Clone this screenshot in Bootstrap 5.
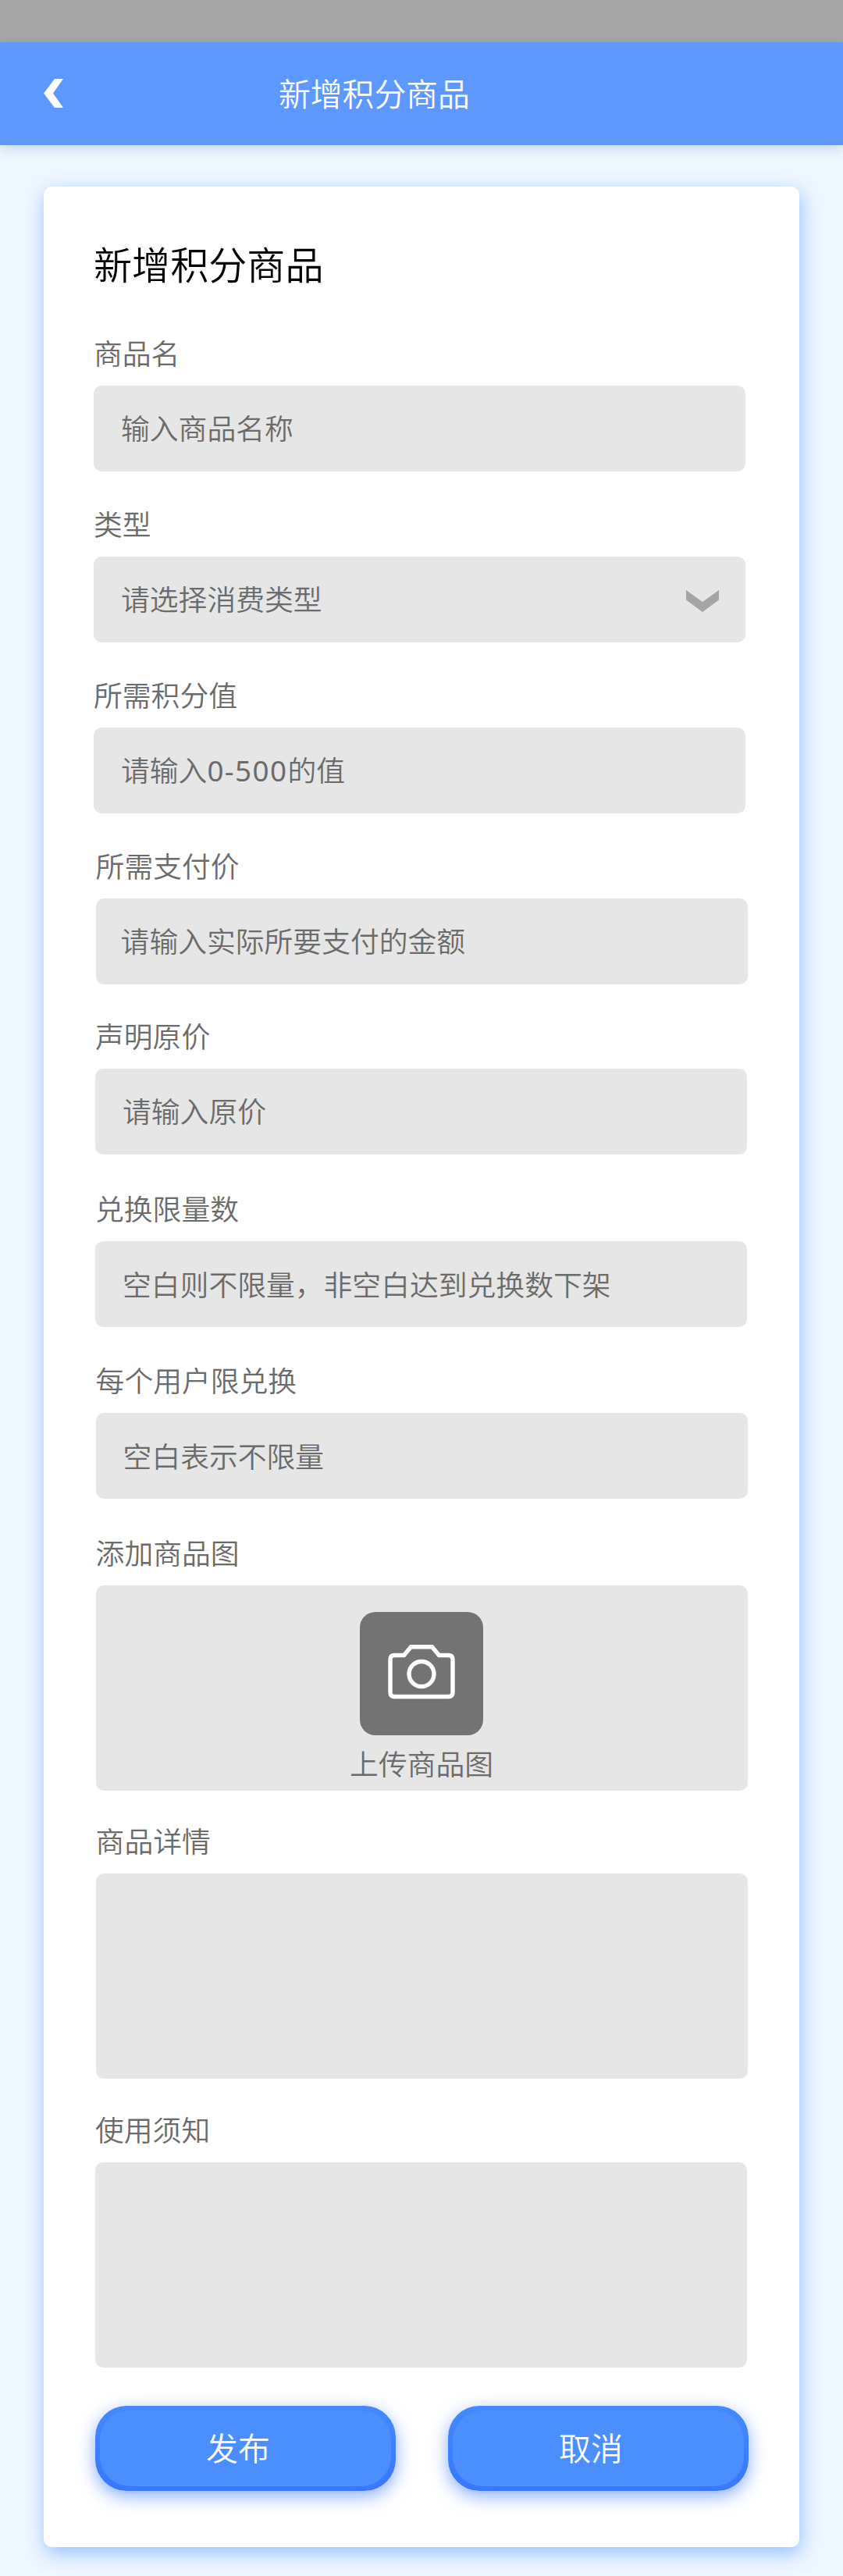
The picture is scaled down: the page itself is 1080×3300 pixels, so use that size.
<!DOCTYPE html>
<html lang="zh-CN">
<head>
<meta charset="utf-8">
<meta name="viewport" content="width=device-width, initial-scale=1">
<title>新增积分商品</title>
<link href="https://cdn.jsdelivr.net/npm/bootstrap@5.3.0/dist/css/bootstrap.min.css" rel="stylesheet">
<style>
body { background: #eff7ff; font-family: "Noto Sans", "Noto Sans CJK SC", sans-serif; font-size: 36.8px; font-weight: 350; color: #6b6b6b; height: 3300px; overflow: hidden; }
.status-strip { height: 54px; background: #a6a6a6; }
.top-bar { height: 132px; background: #5c98ff; padding: 0 0 0 56px; box-shadow: 0 4px 14px rgba(60,110,180,.25); }
.top-title { font-size: 40.8px; line-height: 60px; margin-left: 276px; color: #fff; }
.back-icon { width: 25px; height: 37px; margin-top: -2px; }
.panel { margin: 53px 56px 0; height: 3024px; border-radius: 10px; padding: 68px 0 0 64px; box-shadow: 2px 8px 24px rgba(75,145,255,.55); }
.panel-title { font-size: 49.1px; font-weight: 350; line-height: 64px; margin: 0 0 57px; color: #000; }
.form-group { width: 835px; margin-bottom: 43px; }
.form-group .form-label { display: block; line-height: 50px; margin: 0 0 16px; }
.field-box { height: 110px; border: 0; border-radius: 10px; background: #e6e6e6; color: #6b6b6b; font-size: 36.8px; font-weight: 350; line-height: 50px; padding: 0 34px 1px 35px; }
.field-tall { height: 263px; padding: 34px 0 0; }
.text-low { padding-top: 3px; }
.text-near { padding-left: 32px; }
.shift-2 { margin-left: 2px; } .shift-3 { margin-left: 2.6px; }
.below-40 { margin-bottom: 40px; } .below-41 { margin-bottom: 41px; } .below-42 { margin-bottom: 42px; } .below-44 { margin-bottom: 44px; } .below-45 { margin-bottom: 45px; }
.digits { letter-spacing: 1.4px; font-weight: 400; }
.upload-tile { width: 158px; height: 158px; border-radius: 20px; background: #737373; padding-bottom: 4px; }
.upload-text { line-height: 50px; margin-top: 12px; }
.action-row { gap: 67px; margin: 49px 0 0 2px; }
.action-btn { width: 385px; height: 109px; border: 0; border-radius: 40px; padding: 6px; background: linear-gradient(#4489ff, #3877ff); box-shadow: 0 7px 22px rgba(56,119,255,.6); }
.action-face { height: 97px; border-radius: 38px; background: #4b8eff; color: #fff; font-size: 41px; font-weight: 350; padding: 0 19px 0 0; }
</style>
<script src="https://cdn.jsdelivr.net/npm/bootstrap@5.3.0/dist/js/bootstrap.bundle.min.js"></script>
</head>
<body>
<div class="status-strip"></div>
<header class="top-bar d-flex align-items-center">
  <svg class="back-icon" viewBox="0 0 25 37" aria-hidden="true"><path d="M14 0H25L12 18.5 25 37H14L0 18.5z" fill="#fff"/></svg>
  <div class="top-title">新增积分商品</div>
</header>
<main class="panel bg-white">
  <h1 class="panel-title">新增积分商品</h1>
  <div class="form-group"><label class="form-label">商品名</label><div class="form-control field-box d-flex align-items-center">输入商品名称</div></div>
  <div class="form-group"><label class="form-label">类型</label>
    <div class="form-control field-box d-flex align-items-center justify-content-between">请选择消费类型
      <svg class="mt-1" width="42" height="28" viewBox="0 0 42 28" aria-hidden="true"><path d="M0 0 21 15 42 0V12.5L21 28 0 12.5z" fill="#a5a5a5"/></svg>
    </div>
  </div>
  <div class="form-group"><label class="form-label">所需积分值</label><div class="form-control field-box d-flex align-items-center">请输入<span class="digits">0-500</span>的值</div></div>
  <div class="form-group shift-3 below-42"><label class="form-label">所需支付价</label><div class="form-control field-box text-near d-flex align-items-center">请输入实际所要支付的金额</div></div>
  <div class="form-group shift-2 below-45"><label class="form-label">声明原价</label><div class="form-control field-box d-flex align-items-center">请输入原价</div></div>
  <div class="form-group shift-2 below-44"><label class="form-label">兑换限量数</label><div class="form-control field-box text-low d-flex align-items-center">空白则不限量，非空白达到兑换数下架</div></div>
  <div class="form-group shift-3 below-45"><label class="form-label">每个用户限兑换</label><div class="form-control field-box text-low d-flex align-items-center">空白表示不限量</div></div>
  <div class="form-group shift-3 below-40"><label class="form-label">添加商品图</label>
    <div class="form-control field-box field-tall d-flex flex-column align-items-center">
      <div class="upload-tile d-flex align-items-center justify-content-center">
        <svg width="86" height="70" viewBox="0 0 86 70" fill="none" stroke="#fff" stroke-width="5.4" aria-hidden="true"><path d="M8.500 13.500H20.500L29.500 2.700H56.500L65.500 13.500H77.500Q83 13.500 83 19V61Q83 66.500 77.500 66.500H8.500Q3 66.500 3 61V19Q3 13.500 8.500 13.500z"/><circle cx="43" cy="37.500" r="16"/></svg>
      </div>
      <div class="upload-text">上传商品图</div>
    </div>
  </div>
  <div class="form-group shift-3 below-41"><label class="form-label">商品详情</label><div class="form-control field-box field-tall"></div></div>
  <div class="form-group shift-2"><label class="form-label">使用须知</label><div class="form-control field-box field-tall"></div></div>
  <div class="action-row d-flex">
    <button type="button" class="action-btn"><span class="action-face d-flex align-items-center justify-content-center">发布</span></button>
    <button type="button" class="action-btn"><span class="action-face d-flex align-items-center justify-content-center">取消</span></button>
  </div>
</main>
</body>
</html>
